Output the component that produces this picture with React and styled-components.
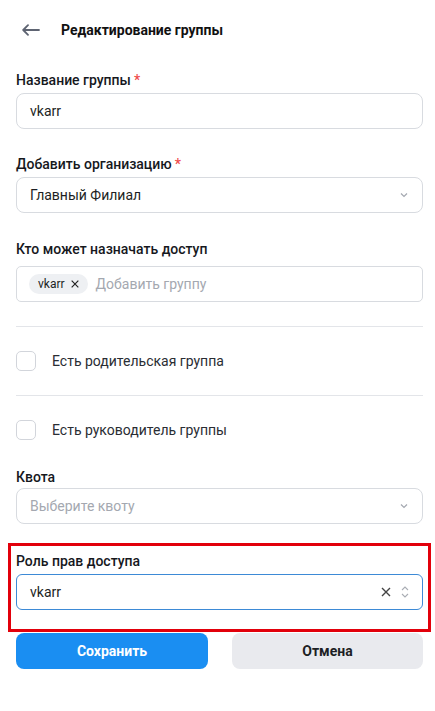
import React from 'react';
import styled, { createGlobalStyle } from 'styled-components';

const GlobalStyle = createGlobalStyle`
    body {
        margin: 0;
        background: #fff;
        font-family: Roboto, "Noto Sans", sans-serif;
        color: #1d1f24;
    }
`;

const Page = styled.div`
    width: 435px;
    padding: 0 12px 0 16px;
    box-sizing: border-box;
`;

const Header = styled.header`
    height: 60px;
    display: flex;
    align-items: center;
    gap: 21px;
    padding-left: 6px;
`;

const BackButton = styled.button`
    display: flex;
    border: 0;
    background: none;
    padding: 0;
    color: #5e6472;
`;

const Title = styled.h1`
    margin: 0;
    font-size: 14px;
    font-weight: 700;
    color: #111;
`;

const Field = styled.div`
    margin-top: ${(p) => p.$top || 0}px;
`;

const Label = styled.div`
    font-size: 14px;
    font-weight: 500;
    line-height: 16px;
    margin-bottom: ${(p) => p.$gap ?? 5}px;
    color: #16181d;
`;

const Required = styled.span`
    color: #ef4b4b;
    margin-left: 3px;
`;

const Box = styled.div`
    height: 36px;
    box-sizing: border-box;
    border: 1px solid ${(p) => (p.$active ? '#3d8ad6' : '#d8dbe0')};
    border-radius: ${(p) => p.$radius ?? 8}px;
    display: flex;
    align-items: center;
    padding: 0 12px 0 ${(p) => p.$left ?? 13}px;
    font-size: 14px;
    color: ${(p) => (p.$placeholder ? '#a4a8b0' : '#1d1f24')};
    gap: 8px;
`;

const Value = styled.span`
    flex: 1;
`;

const Chip = styled.span`
    display: inline-flex;
    align-items: center;
    gap: 5px;
    height: 20px;
    padding: 0 8px 0 9px;
    border-radius: 10px;
    background: #eef0f3;
    font-size: 12px;
    color: #1d1f24;
`;

const Placeholder = styled.span`
    color: #a4a8b0;
    font-size: 14px;
`;

const Divider = styled.hr`
    margin: ${(p) => p.$top || 0}px 0 0;
    border: 0;
    border-top: 1px solid #e3e5e9;
`;

const CheckRow = styled.label`
    display: flex;
    align-items: center;
    gap: 16px;
    padding: 24px 0;
    font-size: 14px;
    color: #2a2d33;
`;

const CheckBox = styled.span`
    width: 20px;
    height: 20px;
    box-sizing: border-box;
    border: 1px solid #d2d5db;
    border-radius: 5px;
`;

const Highlight = styled.section`
    margin: 19px -8px 0 -8px;
    border: 3px solid #e2000b;
    padding: 7px 5px 19px 5px;
`;

const Actions = styled.div`
    display: grid;
    grid-template-columns: 192px 191px;
    justify-content: space-between;
    margin-top: 1px;
`;

const Button = styled.button`
    height: 36px;
    border: 0;
    border-radius: 8px;
    font-family: inherit;
    font-size: 14px;
    font-weight: 700;
    background: ${(p) => (p.$primary ? '#1a8ef2' : '#e9eaee')};
    color: ${(p) => (p.$primary ? '#fff' : '#1d1f24')};
`;

const Chevron = () => (
    <svg width="12" height="12" viewBox="0 0 12 12" fill="none" stroke="#a4a8b0" strokeWidth="1.2">
        <path d="M3 4.5l3 3 3-3" />
    </svg>
);

const Cross = ({ size = 12, color = '#333' }) => (
    <svg width={size} height={size} viewBox="0 0 12 12" fill="none" stroke={color} strokeWidth="1.4">
        <path d="M2 2l8 8M10 2l-8 8" />
    </svg>
);

const UpDown = () => (
    <svg width="10" height="14" viewBox="0 0 10 14" fill="none" stroke="#a9adb4" strokeWidth="1.1">
        <path d="M2 5l3-3 3 3M2 9l3 3 3-3" />
    </svg>
);

const App = () => (
    <Page>
        <GlobalStyle />
        <Header>
            <BackButton>
                <svg width="18" height="12" viewBox="0 0 18 12" fill="none" stroke="currentColor" strokeWidth="1.8" strokeLinecap="round" strokeLinejoin="round">
                    <path d="M17 6H1.5M6 1.2L1.2 6 6 10.8" />
                </svg>
            </BackButton>
            <Title>Редактирование группы</Title>
        </Header>

        <Field $top={12}>
            <Label>Название группы<Required>*</Required></Label>
            <Box>vkarr</Box>
        </Field>

        <Field $top={27}>
            <Label>Добавить организацию<Required>*</Required></Label>
            <Box>
                <Value>Главный Филиал</Value>
                <Chevron />
            </Box>
        </Field>

        <Field $top={28}>
            <Label $gap={9}>Кто может назначать доступ</Label>
            <Box $radius={5} $left={12}>
                <Chip>vkarr <Cross size={10} color="#222" /></Chip>
                <Placeholder>Добавить группу</Placeholder>
            </Box>
        </Field>

        <Divider $top={24} />
        <CheckRow><CheckBox />Есть родительская группа</CheckRow>
        <Divider />
        <CheckRow><CheckBox />Есть руководитель группы</CheckRow>

        <Field $top={5}>
            <Label $gap={3}>Квота</Label>
            <Box $placeholder>
                <Value>Выберите квоту</Value>
                <Chevron />
            </Box>
        </Field>

        <Highlight>
            <Label>Роль прав доступа</Label>
            <Box $active $radius={6}>
                <Value>vkarr</Value>
                <Cross size={12} color="#444" />
                <UpDown />
            </Box>
        </Highlight>

        <Actions>
            <Button $primary>Сохранить</Button>
            <Button>Отмена</Button>
        </Actions>
    </Page>
);

export default App;
